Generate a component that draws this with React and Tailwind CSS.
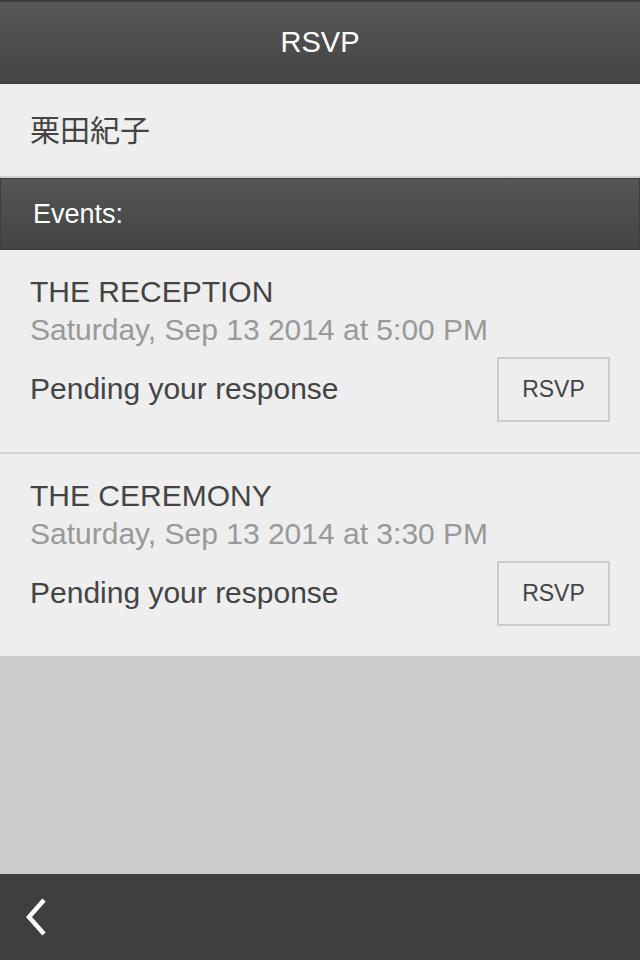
const events = [
  { title: "THE RECEPTION", when: "Saturday, Sep 13 2014 at 5:00 PM", status: "Pending your response" },
  { title: "THE CEREMONY", when: "Saturday, Sep 13 2014 at 3:30 PM", status: "Pending your response" },
];

function EventRow({ ev, last }) {
  return (
    <div className={`bg-[#eeeeee] pl-[30px] pr-[30px] pt-[23px] ${last ? "h-[202px]" : "h-[204px] border-b-2 border-[#d2d2d2]"}`}>
      <div className="text-[30px] leading-[38px] text-[#444444]">{ev.title}</div>
      <div className="text-[30px] leading-[38px] text-[#999999]">{ev.when}</div>
      <div className="mt-[8px] flex items-center justify-between h-[64px]">
        <span className="text-[30px] leading-[38px] text-[#444444]">{ev.status}</span>
        <button className="w-[113px] h-[65px] border-2 border-[#cccccc] text-[23px] text-[#444444] flex items-center justify-center">
          RSVP
        </button>
      </div>
    </div>
  );
}

export default function App() {
  return (
    <div
      className="w-[640px] h-[960px] flex flex-col bg-[#cccccc] overflow-hidden"
      style={{ fontFamily: '"Liberation Sans", "Noto Sans CJK JP", Arial, sans-serif' }}
    >
      {/* top bar */}
      <div className="h-[84px] shrink-0 flex items-center justify-center bg-gradient-to-b from-[#575757] to-[#444444] border-t-2 border-t-[#3c3c3c] border-b border-b-[#3a3a3a]">
        <span className="text-white text-[29px]">RSVP</span>
      </div>

      {/* guest name */}
      <div className="h-[94px] shrink-0 bg-[#eeeeee] border-b-2 border-[#d0d0d0] flex items-center pl-[30px]">
        <span className="text-[30px] text-[#444444]">栗田紀子</span>
      </div>

      {/* section header */}
      <div className="h-[72px] shrink-0 flex items-center pl-[32px] bg-gradient-to-b from-[#555555] to-[#444444] border border-[#3e3e3e]">
        <span className="text-white text-[27px]">Events:</span>
      </div>

      {events.map((ev, i) => (
        <EventRow key={ev.title} ev={ev} last={i === events.length - 1} />
      ))}

      <div className="flex-1" />

      {/* bottom bar */}
      <div className="h-[86px] shrink-0 bg-[#403e3f] flex items-center pl-[26px]">
        <svg width="22" height="38" viewBox="0 0 22 38" fill="none">
          <path d="M18 2 L3 19 L18 36" stroke="white" strokeWidth="4.5" strokeLinecap="butt" strokeLinejoin="miter" />
        </svg>
      </div>
    </div>
  );
}
